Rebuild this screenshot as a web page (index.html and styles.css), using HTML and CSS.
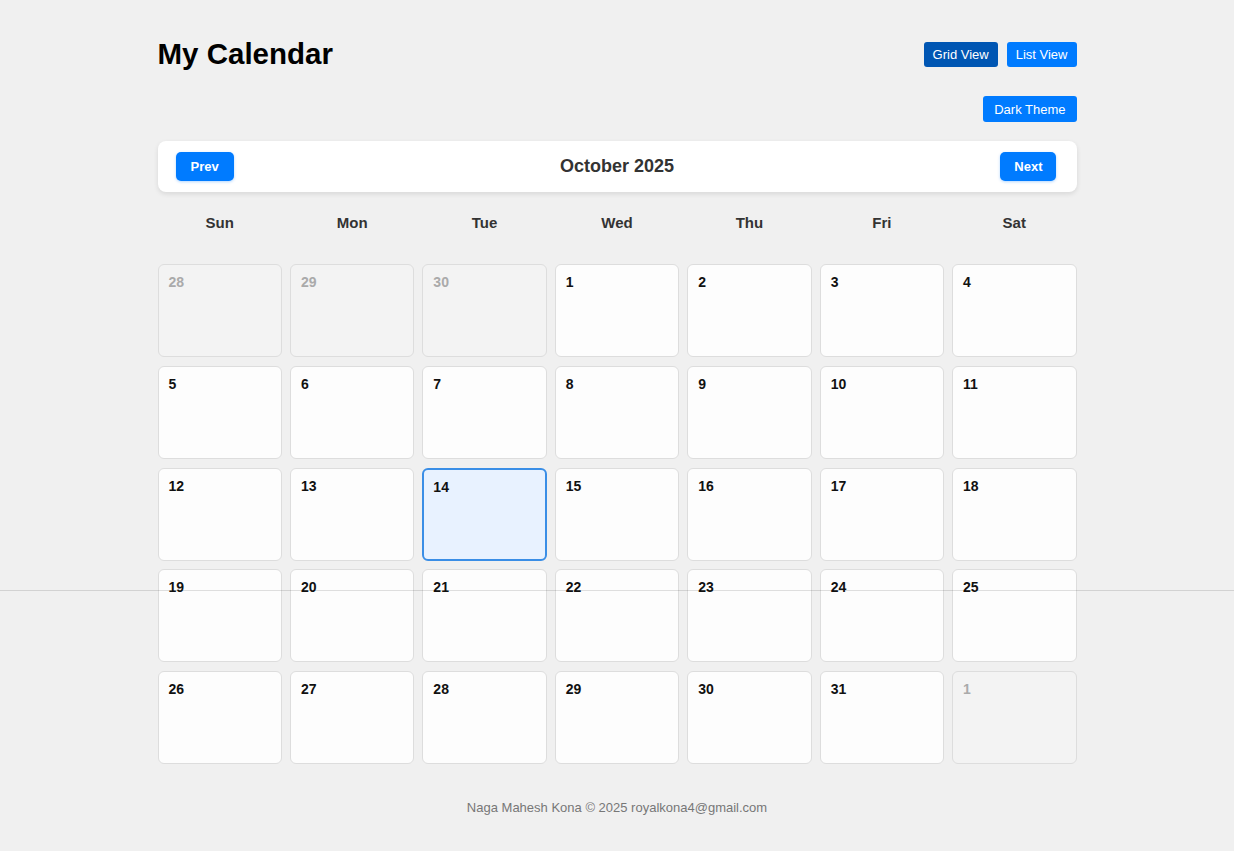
FILE: index.html
```html
<!DOCTYPE html>
<html lang="en">
<head>
<meta charset="utf-8">
<title>My Calendar</title>
<link rel="stylesheet" href="styles.css">
</head>
<body>
<div class="app">
  <header class="top">
    <h1 class="title">My Calendar</h1>
    <div class="views">
      <button class="btn view active">Grid View</button>
      <button class="btn view">List View</button>
    </div>
  </header>
  <div class="theme-row"><button class="btn">Dark Theme</button></div>
  <div class="nav">
    <button class="nav-btn">Prev</button>
    <h2 class="month">October 2025</h2>
    <button class="nav-btn">Next</button>
  </div>
  <div class="weekdays">
    <div>Sun</div><div>Mon</div><div>Tue</div><div>Wed</div><div>Thu</div><div>Fri</div><div>Sat</div>
  </div>
  <div class="grid">
    <div class="cell other">28</div><div class="cell other">29</div><div class="cell other">30</div>
    <div class="cell">1</div><div class="cell">2</div><div class="cell">3</div><div class="cell">4</div>
    <div class="cell">5</div><div class="cell">6</div><div class="cell">7</div><div class="cell">8</div><div class="cell">9</div><div class="cell">10</div><div class="cell">11</div>
    <div class="cell">12</div><div class="cell">13</div><div class="cell today">14</div><div class="cell">15</div><div class="cell">16</div><div class="cell">17</div><div class="cell">18</div>
    <div class="cell">19</div><div class="cell">20</div><div class="cell">21</div><div class="cell">22</div><div class="cell">23</div><div class="cell">24</div><div class="cell">25</div>
    <div class="cell">26</div><div class="cell">27</div><div class="cell">28</div><div class="cell">29</div><div class="cell">30</div><div class="cell">31</div><div class="cell other">1</div>
  </div>
  <footer class="footer">Naga Mahesh Kona © 2025 royalkona4@gmail.com</footer>
</div>
<div class="divider"></div>
</body>
</html>
```
FILE: styles.css
```css
* { box-sizing: border-box; }
html, body { margin: 0; padding: 0; }
body {
  background: #f0f0f0;
  font-family: "Liberation Sans", Arial, sans-serif;
  color: #111;
}
.app {
  width: 919px;
  margin: 0 auto;
  padding-top: 36px;
}
.top {
  display: flex;
  justify-content: space-between;
  align-items: center;
}
.title {
  margin: 0;
  font-size: 29.5px;
  font-weight: bold;
  color: #000;
  line-height: 36px;
}
.views { display: flex; gap: 9px; }
.btn {
  font-family: "Liberation Sans", Arial, sans-serif;
  font-size: 13px;
  color: #fff;
  background: #007bff;
  border: none;
  border-radius: 3px;
  padding: 0 11px;
  height: 25px;
  line-height: 25px;
}
.btn.view { padding: 0 9px; }
.btn.active { background: #0056b3; }
.theme-row {
  display: flex;
  justify-content: flex-end;
  margin-top: 24px;
}
.theme-row .btn { height: 26px; }
.nav {
  margin-top: 19px;
  background: #fff;
  border-radius: 8px;
  box-shadow: 0 2px 5px rgba(0,0,0,0.1);
  height: 51px;
  display: flex;
  align-items: center;
  justify-content: space-between;
  padding: 0 20px 0 18px;
}
.nav-btn {
  font-family: "Liberation Sans", Arial, sans-serif;
  font-weight: bold;
  font-size: 13px;
  color: #fff;
  background: #007bff;
  border: none;
  border-radius: 5px;
  height: 29px;
  padding: 0 14px;
  box-shadow: 0 1px 3px rgba(0,123,255,0.3);
}
.nav-btn:first-child { padding: 0 15px; }
.month {
  margin: 0;
  font-size: 18px;
  font-weight: bold;
  color: #333;
}
.weekdays {
  display: grid;
  grid-template-columns: repeat(7, 1fr);
  gap: 8px;
  margin-top: 22px;
  margin-bottom: 33px;
}
.weekdays div {
  text-align: center;
  font-weight: bold;
  font-size: 15px;
  color: #333;
  line-height: 17px;
}
.grid {
  display: grid;
  grid-template-columns: repeat(7, 1fr);
  grid-auto-rows: 93px;
  column-gap: 8px;
  row-gap: 8.75px;
}
.cell {
  background: #fdfdfd;
  border: 1px solid #ddd;
  border-radius: 6px;
  padding: 10px 10px;
  font-weight: bold;
  font-size: 14px;
  line-height: 15px;
  color: #111;
}
.cell.other {
  background: #f3f3f3;
  color: #aaa;
}
.cell.today {
  background: #e8f2ff;
  border: 2px solid #3a8ee6;
  padding: 10px 9px;
}
.footer {
  text-align: center;
  font-size: 13px;
  color: #777;
  margin-top: 36px;
  padding-bottom: 30px;
}
.divider {
  position: absolute;
  left: 0;
  right: 0;
  top: 590px;
  height: 1px;
  background: rgba(0,0,0,0.12);
}
```
